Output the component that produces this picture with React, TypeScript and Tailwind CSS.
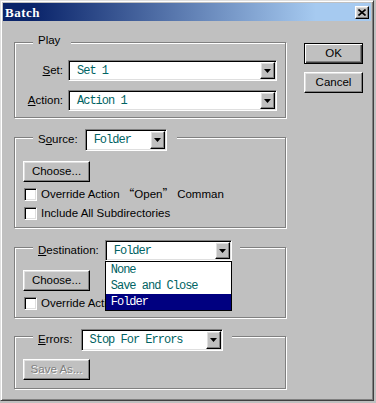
import React from 'react';

const raised =
  'border border-t-white border-l-white border-r-black border-b-black shadow-[inset_-1px_-1px_0_#808080,inset_1px_1px_0_#dfdfdf] bg-[#c0c0c0]';
const sunken =
  'border border-t-[#808080] border-l-[#808080] border-r-white border-b-white shadow-[inset_1px_1px_0_#000,inset_-1px_-1px_0_#dfdfdf] bg-white';
const group =
  'border border-[#808080] shadow-[inset_1px_1px_0_#fff,1px_1px_0_#fff] min-w-0';
const mono = "font-['Liberation_Mono',monospace] text-[12px] tracking-[-1px] text-[#006363]";

function Arrow() {
  return (
    <svg width="7" height="4" viewBox="0 0 7 4">
      <polygon points="0,0 7,0 3.5,4" fill="#000" />
    </svg>
  );
}

function Combo({ value, width, height = 22 }: { value: string; width: number; height?: number }) {
  return (
    <div className={`${sunken} flex p-[1px]`} style={{ width, height }}>
      <div className={`${mono} flex-1 pl-[7px] flex items-center leading-none whitespace-nowrap overflow-hidden`}>
        {value}
      </div>
      <div className={`${raised} w-[15px] flex items-center justify-center`}>
        <Arrow />
      </div>
    </div>
  );
}

function Button({ label, disabled, wide }: { label: string; disabled?: boolean; wide?: boolean }) {
  return (
    <div
      className={`${raised} h-[21px] flex items-center justify-center text-[11.5px] ${
        wide ? 'w-[59px]' : 'w-[67px]'
      } ${disabled ? 'text-[#808080] [text-shadow:1px_1px_0_#fff]' : 'text-black'}`}
    >
      {label}
    </div>
  );
}

function Check({ children }: { children: React.ReactNode }) {
  return (
    <div className="flex items-center h-[13px] ml-[1px]">
      <div className={`${sunken} w-[13px] h-[13px] shrink-0`} />
      <span className="ml-[4px] whitespace-nowrap">{children}</span>
    </div>
  );
}

const OverrideText = () => (
  <>
    Override Action <span className="font-['Noto_Sans_CJK_SC',sans-serif]">“</span>Open
    <span className="font-['Noto_Sans_CJK_SC',sans-serif]">”</span> Comman
  </>
);

export default function App() {
  return (
    <div className="w-[376px] h-[403px] bg-[#c0c0c0] font-['Liberation_Sans',Arial,sans-serif] text-[11.5px] text-black">
      <div className="w-[374px] h-[401px] border border-t-[#dfdfdf] border-l-[#dfdfdf] border-r-[#404040] border-b-[#404040] shadow-[inset_1px_1px_0_#fff,inset_-1px_-1px_0_#808080] p-[2px] flex flex-col">
        {/* title bar */}
        <div className="h-[18px] flex items-center justify-between pl-[2px] pr-[2px] bg-[linear-gradient(to_right,#0a246a_8%,#a6caf0_85%)]">
          <span className="font-['Liberation_Serif',serif] font-bold text-[13px] tracking-[0.5px] text-white leading-none">Batch</span>
          <div className={`${raised} w-[14px] h-[13px] flex items-center justify-center`}>
            <svg width="8" height="7" viewBox="0 0 8 7">
              <path d="M0.5 0.5 L7.5 6.5 M7.5 0.5 L0.5 6.5" stroke="#000" strokeWidth="1.6" />
            </svg>
          </div>
        </div>

        <div className="flex">
          {/* left column */}
          <div className="ml-[11px] mt-[12px] flex flex-col">
            {/* Play */}
            <fieldset className={`${group} w-[272px] px-[8px] pt-[9px] pb-[6px]`}>
              <legend className="ml-[10px] pl-[5px] pr-[11px] pb-[4px] leading-[14px] bg-[#c0c0c0]">Play</legend>
              <div className="flex items-center h-[21px]">
                <span className="w-[41px] text-right">
                  <u>S</u>et:
                </span>
                <div className="ml-[5px]">
                  <Combo value="Set 1" width={209} height={21} />
                </div>
              </div>
              <div className="flex items-center h-[21px] mt-[9px]">
                <span className="w-[41px] text-right">
                  <u>A</u>ction:
                </span>
                <div className="ml-[5px]">
                  <Combo value="Action 1" width={209} height={21} />
                </div>
              </div>
            </fieldset>

            {/* Source */}
            <fieldset className={`${group} w-[272px] mt-[5px] px-[8px] pt-[10px] pb-[7px]`}>
              <legend className="ml-[10px] pl-[5px] pr-[10px] pt-[6px] flex items-center bg-[#c0c0c0]">
                <span>
                  S<u>o</u>urce:
                </span>
                <div className="ml-[7px]">
                  <Combo value="Folder" width={82} />
                </div>
              </legend>
              <Button label="Choose..." />
              <div className="mt-[6px]">
                <Check>
                  <OverrideText />
                </Check>
              </div>
              <div className="mt-[6px]">
                <Check>Include All Subdirectories</Check>
              </div>
            </fieldset>

            {/* Destination */}
            <fieldset className={`${group} w-[272px] mt-[6px] px-[8px] pt-[9px] pb-[7px]`}>
              <legend className="ml-[10px] pl-[5px] pr-[8px] pt-[6px] flex items-center bg-[#c0c0c0] relative z-10">
                <span>
                  <u>D</u>estination:
                </span>
                <div className="ml-[6px] relative">
                  <Combo value="Folder" width={127} height={21} />
                  {/* open dropdown list */}
                  <div className="absolute left-0 top-full w-[127px] border border-black bg-white z-20">
                    <div className={`${mono} h-[16px] pl-[5px] flex items-center`}>None</div>
                    <div className={`${mono} h-[16px] pl-[5px] flex items-center`}>Save and Close</div>
                    <div className={`${mono} h-[16px] pl-[5px] flex items-center bg-[#000080] !text-white`}>Folder</div>
                  </div>
                </div>
              </legend>
              <Button label="Choose..." />
              <div className="mt-[6px]">
                <Check>
                  <OverrideText />
                </Check>
              </div>
            </fieldset>

            {/* Errors */}
            <fieldset className={`${group} w-[272px] mt-[3px] px-[8px] pt-[8px] pb-[8px]`}>
              <legend className="ml-[10px] pl-[5px] pr-[9px] pt-[8px] flex items-center bg-[#c0c0c0]">
                <span>
                  <u>E</u>rrors:
                </span>
                <div className="ml-[8px]">
                  <Combo value="Stop For Errors" width={142} />
                </div>
              </legend>
              <Button label="Save As..." disabled />
            </fieldset>
          </div>

          {/* right column */}
          <div className="ml-[18px] mt-[22px] flex flex-col">
            <div className="border border-black">
              <div className="w-[57px] h-[19px] flex items-center justify-center shadow-[inset_1px_1px_0_#fff,inset_-1px_-1px_0_#404040,inset_-2px_-2px_0_#808080]">
                OK
              </div>
            </div>
            <div className="mt-[8px]">
              <Button label="Cancel" wide />
            </div>
          </div>
        </div>
      </div>
    </div>
  );
}
